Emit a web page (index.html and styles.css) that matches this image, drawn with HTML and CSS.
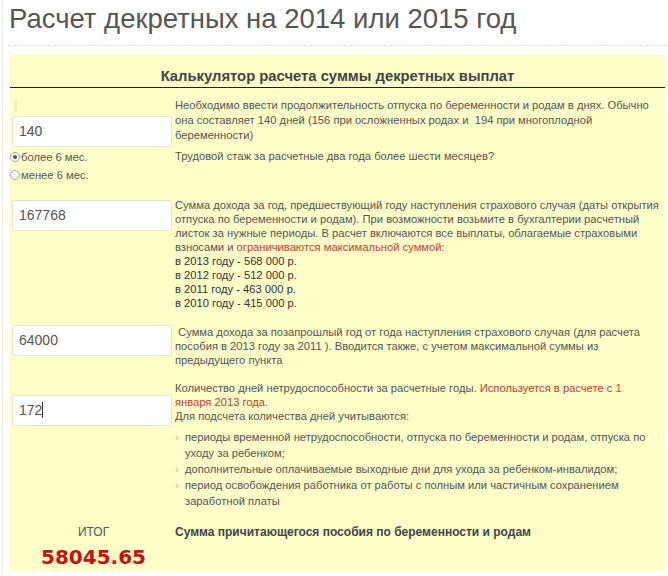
FILE: index.html
```html
<!DOCTYPE html>
<html lang="ru">
<head>
<meta charset="utf-8">
<title>Расчет декретных</title>
<link rel="stylesheet" href="styles.css">
</head>
<body>
<div class="page">
  <h1 class="title">Расчет декретных на 2014 или 2015 год</h1>
  <div class="calc">
    <div class="calc-head">Калькулятор расчета суммы декретных выплат</div>

    <div class="row row-days">
      <div class="left">
        <span class="ghost"></span>
        <div class="field">140</div>
      </div>
      <div class="right">Необходимо ввести продолжительность отпуска по беременности и родам в днях. Обычно<br>она составляет 140 дней (156 при осложненных родах и&nbsp; 194 при многоплодной<br>беременности)</div>
    </div>

    <div class="row row-radio">
      <div class="left radios">
        <label class="radio"><span class="dot on"></span>более 6 мес.</label>
        <label class="radio"><span class="dot"></span>менее 6 мес.</label>
      </div>
      <div class="right">Трудовой стаж за расчетные два года более шести месяцев?</div>
    </div>

    <div class="row row-income">
      <div class="left">
        <div class="field">167768</div>
      </div>
      <div class="right">Сумма дохода за год, предшествующий году наступления страхового случая (даты открытия<br>отпуска по беременности и родам). При возможности возьмите в бухгалтерии расчетный<br>листок за нужные периоды. В расчет включаются все выплаты, облагаемые страховыми<br>взносами и <span class="red">ограничиваются максимальной суммой</span>:
        <div class="years">в 2013 году - 568 000 р.<br>в 2012 году - 512 000 р.<br>в 2011 году - 463 000 р.<br>в 2010 году - 415 000 р.</div>
      </div>
    </div>

    <div class="row row-prev">
      <div class="left">
        <div class="field">64000</div>
      </div>
      <div class="right">&nbsp;Сумма дохода за позапрошлый год от года наступления страхового случая (для расчета<br>пособия в 2013 году за 2011 ). Вводится также, с учетом максимальной суммы из<br>предыдущего пункта</div>
    </div>

    <div class="row row-sick">
      <div class="left">
        <div class="field">172<span class="caret"></span></div>
      </div>
      <div class="right">Количество дней нетрудоспособности за расчетные годы. <span class="red">Используется в расчете с 1<br>января 2013 года.</span><br>Для подсчета количества дней учитываются:
        <ul class="list">
          <li>периоды временной нетрудоспособности, отпуска по беременности и родам, отпуска по<br>уходу за ребенком;</li>
          <li>дополнительные оплачиваемые выходные дни для ухода за ребенком-инвалидом;</li>
          <li>период освобождения работника от работы с полным или частичным сохранением<br>заработной платы</li>
        </ul>
      </div>
    </div>

    <div class="row row-total">
      <div class="left total">
        <div class="total-label">ИТОГ</div>
        <div class="total-value">58045.65</div>
      </div>
      <div class="right total-text">Сумма причитающегося пособия по беременности и родам</div>
    </div>
  </div>
</div>
</body>
</html>
```

FILE: styles.css
```css
html, body {
  margin: 0;
  padding: 0;
  background: #ffffff;
}
body {
  font-family: "Liberation Sans", Arial, sans-serif;
  color: #555;
}
.page {
  margin-left: 2px;
  border-left: 1px solid #ececec;
  min-height: 576px;
  padding: 0 0 0 5px;
}
.title {
  margin: 0;
  padding: 3px 0 10px 1px;
  font-weight: normal;
  font-size: 27.5px;
  line-height: 32px;
  color: #555;
  border-bottom: 1px dashed #e2e2e2;
}
.calc {
  margin: 9px 0 0 2px;
  width: 655px;
  background: #fefec9;
  padding-bottom: 1px;
}
.calc-head {
  box-sizing: border-box;
  height: 33px;
  padding-top: 13px;
  line-height: 16px;
  text-align: center;
  font-weight: bold;
  font-size: 14.8px;
  color: #444;
  border-bottom: 1px solid #222;
}
.row {
  display: grid;
  grid-template-columns: 165px 1fr;
  align-items: start;
}
.left {
  padding-left: 2px;
}
.right {
  font-size: 11.2px;
  line-height: 14px;
  white-space: nowrap;
}
.field {
  box-sizing: border-box;
  width: 160px;
  height: 31px;
  background: #fff;
  border: 1px solid #e4e4d0;
  border-radius: 2px;
  font-size: 14px;
  line-height: 29px;
  padding-left: 6px;
  color: #555;
}
.caret {
  display: inline-block;
  width: 1px;
  height: 16px;
  background: #333;
  vertical-align: -3px;
}
.ghost {
  display: block;
  width: 3px;
  height: 13px;
  margin: 0 0 4px 2px;
  background: #efefb8;
}
.row-days .left {
  padding-top: 11px;
}
.row-days .right {
  padding-top: 10px;
  line-height: 15px;
}
.radios {
  display: flex;
  flex-direction: column;
  padding-left: 0;
  padding-top: 1px;
}
.row-radio .right {
  padding-top: 2px;
  line-height: 15px;
}
.radio {
  display: flex;
  align-items: center;
  font-size: 11.2px;
  line-height: 18px;
  color: #555;
}
.dot {
  box-sizing: border-box;
  width: 10px;
  height: 10px;
  border-radius: 50%;
  border: 1px solid #aaa;
  background: #f4f4f4;
  margin-right: 1px;
  position: relative;
}
.dot.on::after {
  content: "";
  position: absolute;
  left: 2px;
  top: 2px;
  width: 4px;
  height: 4px;
  border-radius: 50%;
  background: #555;
}
.row-income .left {
  padding-top: 16px;
}
.row-income .right {
  padding-top: 14px;
}
.red {
  color: #cc3b2a;
}
.years {
  color: #333;
}
.row-prev .left {
  padding-top: 15px;
}
.row-prev .right {
  padding-top: 15px;
}
.row-sick .left {
  padding-top: 28px;
}
.row-sick .right {
  padding-top: 14px;
}
.list {
  list-style: none;
  margin: 6px 0 0 0;
  padding: 0;
  line-height: 16px;
}
.list li {
  position: relative;
  padding-left: 10px;
}
.list li::before {
  content: "›";
  position: absolute;
  left: 0;
  top: 0;
  color: #d9b070;
  font-size: 11px;
}
.row-total {
  padding-top: 15px;
}
.total-label {
  font-size: 12px;
  line-height: 16px;
  color: #555;
  text-align: center;
}
.total-value {
  font-family: "DejaVu Sans", Verdana, sans-serif;
  font-weight: bold;
  font-size: 20px;
  line-height: 26px;
  color: #c41212;
  margin-top: 4px;
  text-align: center;
}
.total-text {
  font-weight: bold;
  font-size: 12px;
  line-height: 16px;
  color: #444;
}
```
